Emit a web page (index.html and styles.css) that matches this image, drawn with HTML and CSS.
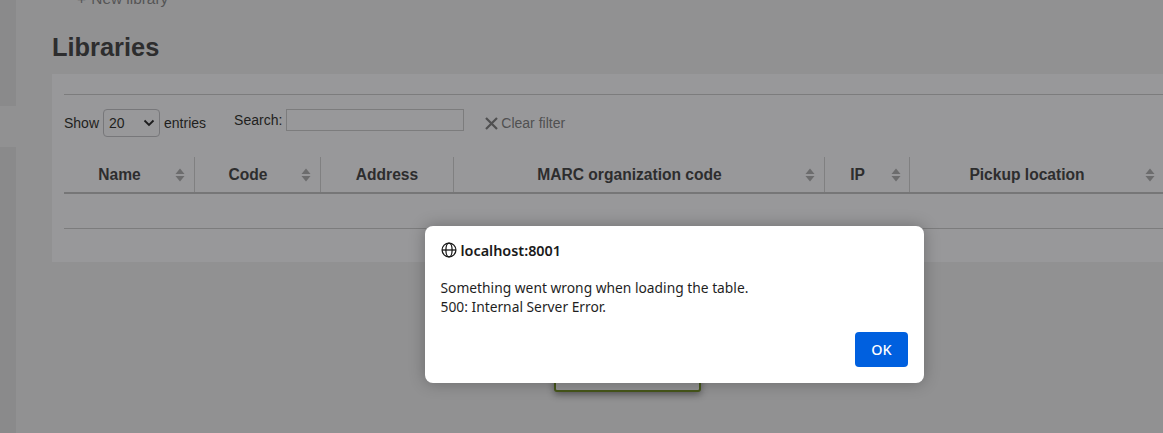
FILE: index.html
```html
<!DOCTYPE html>
<html lang="en">
<head>
<meta charset="utf-8">
<title>Libraries</title>
<link rel="stylesheet" href="styles.css">
</head>
<body>
<div class="page">
  <aside class="rail">
    <div class="rail-dark rail-top"></div>
    <div class="rail-light"></div>
    <div class="rail-dark rail-bottom"></div>
  </aside>
  <main class="main">
    <div class="toolbar"><span class="plus">+</span> New library</div>
    <h1 class="title">Libraries</h1>
    <section class="panel">
      <div class="controls">
        <label class="length">Show
          <span class="select"><span>20</span>
            <svg class="chev" width="12" height="8" viewBox="0 0 12 8"><path d="M1.5 1.5 6 6l4.5-4.5" fill="none" stroke="#1c1c1d" stroke-width="1.8"/></svg>
          </span>
          entries</label>
        <label class="search">Search:<span class="input"></span></label>
        <span class="clear">
          <svg width="13" height="13" viewBox="0 0 13 13"><path d="M1 1l11 11M12 1 1 12" stroke="#505051" stroke-width="2.2" fill="none"/></svg>
          Clear filter</span>
      </div>
      <div class="thead">
        <div class="th w-name">Name<svg class="sort" width="10" height="14" viewBox="0 0 10 14"><path d="M5 .5 9.5 6H.5zM5 13.5.5 8h9z" fill="#6c6c6d"/></svg></div>
        <div class="th w-code">Code<svg class="sort" width="10" height="14" viewBox="0 0 10 14"><path d="M5 .5 9.5 6H.5zM5 13.5.5 8h9z" fill="#6c6c6d"/></svg></div>
        <div class="th w-addr">Address</div>
        <div class="th w-marc">MARC organization code<svg class="sort" width="10" height="14" viewBox="0 0 10 14"><path d="M5 .5 9.5 6H.5zM5 13.5.5 8h9z" fill="#6c6c6d"/></svg></div>
        <div class="th w-ip">IP<svg class="sort" width="10" height="14" viewBox="0 0 10 14"><path d="M5 .5 9.5 6H.5zM5 13.5.5 8h9z" fill="#6c6c6d"/></svg></div>
        <div class="th w-pick">Pickup location<svg class="sort" width="10" height="14" viewBox="0 0 10 14"><path d="M5 .5 9.5 6H.5zM5 13.5.5 8h9z" fill="#6c6c6d"/></svg></div>
      </div>
      <div class="tbody"></div>
    </section>
  </main>
</div>
<div class="toast"></div>
<div class="dialog" role="alertdialog">
  <div class="origin">
    <svg width="16" height="16" viewBox="0 0 16 16" fill="none" stroke="#1a1a1a" stroke-width="1.3"><circle cx="8" cy="8" r="6.9"/><ellipse cx="8" cy="8" rx="3.1" ry="6.9"/><path d="M1.1 8h13.8"/></svg>
    <span>localhost:8001</span>
  </div>
  <p class="message">Something went wrong when loading the table.<br>500: Internal Server Error.</p>
  <div class="actions"><button class="ok">OK</button></div>
</div>
</body>
</html>
```
FILE: styles.css
```css
* { box-sizing: border-box; }
html, body { margin: 0; height: 100%; }
body {
  width: 1163px;
  height: 433px;
  overflow: hidden;
  background: #919192;
  font-family: "Liberation Sans", Arial, sans-serif;
  font-size: 14px;
  color: #1f1f20;
}
.page { display: flex; height: 433px; overflow: hidden; }
.rail { width: 16px; flex: none; display: flex; flex-direction: column; }
.rail-top { height: 106px; }
.rail-light { height: 41px; background: #919192; }
.rail-bottom { flex: 1; }
.rail-dark { background: #8a8a8b; }
.main { flex: 1; min-width: 0; padding-left: 36px; }
.toolbar { height: 20px; margin-top: -11px; padding-left: 25px; font-size: 15.4px; color: #555556; line-height: 20px; white-space: nowrap; }
.plus { display: inline-block; width: 10px; }
.title { margin: 25px 0 0; font-size: 25.4px; line-height: 27px; font-weight: 700; color: #2d2d2e; }
.panel {
  margin-top: 13px;
  width: 1111px;
  height: 188px;
  padding: 20px 0 0 12px;
  background: #98989a;
}
.controls {
  border-top: 1px solid #7c7c7d;
  height: 63px;
  display: flex;
  align-items: flex-start;
  padding-top: 14px;
}
.length { display: flex; align-items: center; gap: 4px; height: 28px; }
.select {
  width: 57px; height: 28px;
  border: 1px solid #77777a;
  border-radius: 4px;
  display: flex; align-items: center; justify-content: space-between;
  padding: 0 4px 0 5px;
}
.chev { flex: none; }
.search { display: flex; align-items: center; gap: 4px; margin-left: 28px; height: 22px; }
.input { width: 178px; height: 22px; border: 1px solid #7c7c7d; background: #98989a; }
.clear { display: flex; align-items: center; gap: 3px; margin-left: 21px; height: 28px; color: #505051; }
.thead {
  display: flex;
  height: 37px;
  border-bottom: 2px solid #767677;
  width: 1099px;
}
.th {
  position: relative;
  display: flex; align-items: center; justify-content: center;
  font-weight: 700; font-size: 15.6px; color: #2d2d2e;
  border-right: 1px solid #808081;
}
.th:last-child { border-right: 0; }
.sort { position: absolute; right: 9px; top: 11px; }
.w-name { width: 131px; padding-right: 19px; }
.w-code { width: 126px; padding-right: 19px; }
.w-addr { width: 133px; }
.w-marc { width: 371px; padding-right: 19px; }
.w-ip { width: 85px; padding-right: 19px; }
.w-ip .sort { right: 8px; }
.w-pick { width: 253px; padding-right: 19px; }
.w-pick .sort { right: 8px; }
.tbody { height: 35px; width: 1099px; border-bottom: 1px solid #7c7c7d; }
.toast {
  position: absolute;
  left: 554px; top: 340px;
  width: 147px; height: 52px;
  border: 2px solid #46561a;
  border-radius: 3px;
  background: #919192;
  box-shadow: 0 3px 7px rgba(0,0,0,.38);
}
.dialog {
  position: absolute;
  left: 425px; top: 226px;
  width: 499px; height: 157px;
  background: #fff;
  border-radius: 8px;
  box-shadow: 0 0 16px rgba(0,0,0,.28);
  padding: 15px 16px 0 15.5px;
  font-family: "Noto Sans", sans-serif;
  color: #1f1f1f;
}
.origin { display: flex; align-items: center; gap: 4px; font-size: 14.4px; font-weight: 600; height: 18px; color: #1a1a1a; }
.message { margin: 19px 0 0; font-size: 13.8px; line-height: 19px; }
.actions { display: flex; justify-content: flex-end; margin-top: 16px; }
.ok {
  width: 53px; height: 35px;
  border: 0; border-radius: 4px;
  background: #0060df;
  color: #fff;
  font-family: inherit; font-size: 14.4px; font-weight: 500;
}
```
